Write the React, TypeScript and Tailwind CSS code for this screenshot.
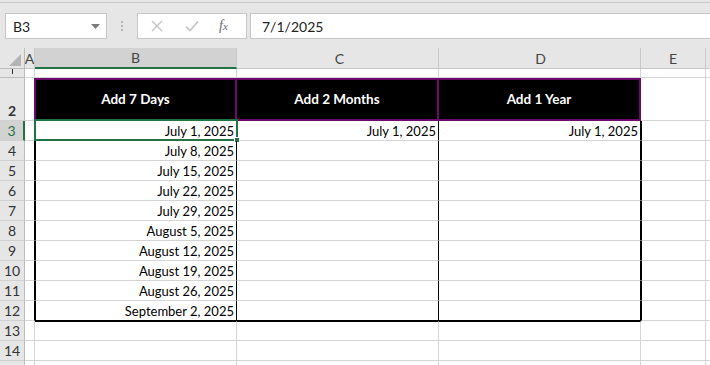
import React from "react";

const FONT = { fontFamily: "Lato, 'Liberation Sans', sans-serif" };

const dates = [
  "July 1, 2025",
  "July 8, 2025",
  "July 15, 2025",
  "July 22, 2025",
  "July 29, 2025",
  "August 5, 2025",
  "August 12, 2025",
  "August 19, 2025",
  "August 26, 2025",
  "September 2, 2025",
];

function RowHead({ n, sel, h }: { n: string; sel?: boolean; h: string }) {
  return (
    <div
      className={`${h} w-[25px] shrink-0 flex justify-center items-end overflow-hidden border-b border-[#d0d0d0] text-[14px] leading-[18px] ${
        sel ? "bg-[#d2d2d2] text-[#217346] border-r-2 border-r-[#217346]" : "bg-[#e6e6e6] text-[#333] border-r border-r-[#bcbcbc]"
      }`}
    >
      {n}
    </div>
  );
}

export default function App() {
  return (
    <div className="w-[710px] h-[365px] overflow-hidden bg-white" style={FONT}>
      {/* toolbar */}
      <div className="h-[48px] bg-[#e6e6e6] flex flex-col">
        <div className="h-[2px]" />
        <div className="h-px bg-[#cacaca]" />
        <div className="flex items-start pt-[10px]">
          <div className="ml-[5px] w-[102px] h-[26px] bg-white border border-[#c6c6c6] flex items-center justify-between pl-[7px] pr-[6px]">
            <span className="text-[14px] text-[#222]">B3</span>
            <svg width="9" height="5" viewBox="0 0 9 5">
              <path d="M0 0h9L4.5 5z" fill="#7a7a7a" />
            </svg>
          </div>
          <div className="w-[30px] h-[26px] flex flex-col items-center justify-center gap-[2px]">
            <div className="w-[2px] h-[2px] bg-[#b5b5b5]" />
            <div className="w-[2px] h-[2px] bg-[#b5b5b5]" />
            <div className="w-[2px] h-[2px] bg-[#b5b5b5]" />
          </div>
          <div className="w-[110px] h-[26px] bg-white border border-[#c6c6c6] flex items-center">
            <svg className="ml-[13px]" width="12" height="12" viewBox="0 0 12 12">
              <path d="M1 1l10 10M11 1L1 11" stroke="#c3c3c3" strokeWidth="1.4" />
            </svg>
            <svg className="ml-[22px]" width="14" height="12" viewBox="0 0 14 12">
              <path d="M1 6.5l4 4L13 1.5" stroke="#c3c3c3" strokeWidth="1.6" fill="none" />
            </svg>
            <span
              className="ml-[20px] text-[14px] italic text-[#6a6a6a] leading-none"
              style={{ fontFamily: "'Liberation Serif', serif" }}
            >
              f<span className="text-[11px]">x</span>
            </span>
          </div>
          <div className="ml-[3px] flex-1 h-[26px] bg-white border border-r-0 border-[#c6c6c6] flex items-center pl-[11px]">
            <span className="text-[14px] text-[#222]">7/1/2025</span>
          </div>
        </div>
      </div>

      {/* column headers */}
      <div className="flex h-[21px] text-[14px] text-[#444]">
        <div className="w-[25px] shrink-0 bg-[#e6e6e6] border-r border-b border-[#bcbcbc] flex items-end justify-end pr-[3px] pb-[2px]">
          <svg width="12" height="12" viewBox="0 0 12 12">
            <path d="M12 0V12H0z" fill="#b4b4b4" />
          </svg>
        </div>
        <div className="w-[10px] shrink-0 bg-[#e6e6e6] border-r border-b border-[#c8c8c8] flex items-center justify-center overflow-hidden">
          A
        </div>
        <div className="w-[202px] shrink-0 bg-[#d2d2d2] border-r border-r-[#c8c8c8] border-b-2 border-b-[#217346] flex items-center justify-center">
          B
        </div>
        <div className="w-[202px] shrink-0 bg-[#e6e6e6] border-r border-b border-[#c8c8c8] flex items-center justify-center pl-[4px]">
          C
        </div>
        <div className="w-[202px] shrink-0 bg-[#e6e6e6] border-r border-b border-[#c8c8c8] flex items-center justify-center pl-[2px]">
          D
        </div>
        <div className="w-[65px] shrink-0 bg-[#e6e6e6] border-r border-b border-[#c8c8c8] flex items-center justify-center">
          E
        </div>
        <div className="flex-1 bg-[#e6e6e6] border-b border-[#c8c8c8]" />
      </div>

      {/* row 1 */}
      <div className="flex h-[9px]">
        <div className="h-[9px] w-[25px] shrink-0 bg-[#e6e6e6] border-r border-b border-[#bcbcbc] flex justify-center overflow-hidden">
          <div className="w-px h-[5px] bg-[#333]" />
        </div>
        <div className="w-[10px] shrink-0 border-r border-b border-[#d4d4d4]" />
        <div className="w-[202px] shrink-0 border-r border-b border-[#d4d4d4]" />
        <div className="w-[202px] shrink-0 border-r border-b border-[#d4d4d4]" />
        <div className="w-[202px] shrink-0 border-r border-b border-[#d4d4d4]" />
        <div className="w-[65px] shrink-0 border-r border-b border-[#d4d4d4]" />
        <div className="flex-1 border-b border-[#d4d4d4]" />
      </div>

      {/* row 2 header */}
      <div className="flex h-[43px] text-[13.5px] font-bold text-white">
        <RowHead n="2" h="h-[43px]" />
        <div className="w-[10px] shrink-0 border-r border-r-[#6b0a6b] border-b border-b-[#d4d4d4]" />
        <div className="w-[202px] shrink-0 bg-black border-l border-y-2 border-r-2 border-[#6b0a6b] flex items-center justify-center">
          Add 7 Days
        </div>
        <div className="w-[202px] shrink-0 bg-black border-y-2 border-r-2 border-[#6b0a6b] flex items-center justify-center">
          Add 2 Months
        </div>
        <div className="w-[202px] shrink-0 bg-black border-y-2 border-r-2 border-[#6b0a6b] flex items-center justify-center">
          Add 1 Year
        </div>
        <div className="w-[65px] shrink-0 border-r border-b border-[#d4d4d4]" />
        <div className="flex-1 border-b border-[#d4d4d4]" />
      </div>

      {/* data rows */}
      {dates.map((d, i) => {
        const last = i === dates.length - 1;
        const first = i === 0;
        return (
          <div key={i} className="flex h-[20px] text-[13px] text-black">
            <RowHead n={String(i + 3)} h="h-[20px]" sel={first} />
            <div className="w-[10px] shrink-0 border-r border-r-black border-b border-b-[#d4d4d4]" />
            <div
              className={`relative w-[202px] shrink-0 border-l border-l-black border-r border-r-black border-b ${
                last ? "border-b-black" : "border-b-[#d4d4d4]"
              } flex items-end justify-end pr-[2px] leading-[18px]`}
            >
              {d}
              {first && (
                <div className="absolute -left-[2px] -top-[2px] w-[204px] h-[22px] border-2 border-[#217346]">
                  <div className="absolute -right-[4px] -bottom-[4px] w-[6px] h-[6px] bg-[#217346] border border-white" />
                </div>
              )}
            </div>
            <div
              className={`w-[202px] shrink-0 border-r border-r-black border-b ${
                last ? "border-b-black" : "border-b-[#d4d4d4]"
              } flex items-end justify-end pr-[2px] leading-[18px]`}
            >
              {first ? "July 1, 2025" : ""}
            </div>
            <div
              className={`w-[202px] shrink-0 border-r border-r-black border-b ${
                last ? "border-b-black" : "border-b-[#d4d4d4]"
              } flex items-end justify-end pr-[2px] leading-[18px]`}
            >
              {first ? "July 1, 2025" : ""}
            </div>
            <div className="w-[65px] shrink-0 border-l border-l-black border-r border-r-[#d4d4d4] border-b border-b-[#d4d4d4]" />
            <div className="flex-1 border-b border-[#d4d4d4]" />
          </div>
        );
      })}

      {/* rows 13-15 */}
      {["13", "14", ""].map((n, i) => (
        <div key={i} className="flex h-[20px]">
          <RowHead n={n} h="h-[20px]" />
          <div className="w-[10px] shrink-0 border-r border-b border-[#d4d4d4]" />
          <div className={`w-[202px] shrink-0 border-r border-b border-[#d4d4d4] ${i === 0 ? "border-t border-t-black" : ""}`} />
          <div className={`w-[202px] shrink-0 border-r border-b border-[#d4d4d4] ${i === 0 ? "border-t border-t-black" : ""}`} />
          <div className={`w-[202px] shrink-0 border-r border-b border-[#d4d4d4] ${i === 0 ? "border-t border-t-black" : ""}`} />
          <div className="w-[65px] shrink-0 border-r border-b border-[#d4d4d4]" />
          <div className="flex-1 border-b border-[#d4d4d4]" />
        </div>
      ))}
    </div>
  );
}
